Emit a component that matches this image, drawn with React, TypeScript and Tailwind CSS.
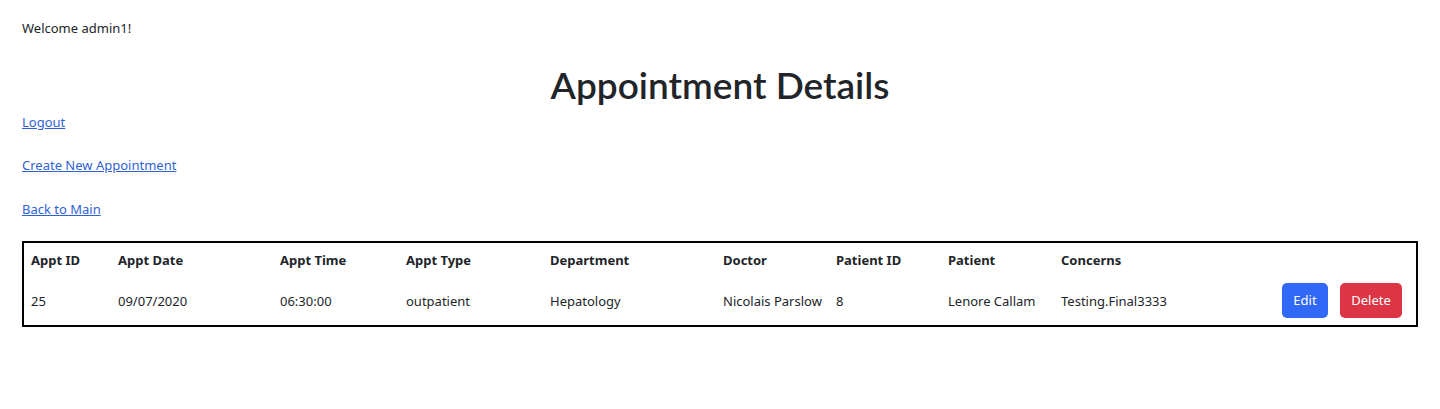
import React from "react";

type Appointment = {
  id: number;
  date: string;
  time: string;
  type: string;
  department: string;
  doctor: string;
  patientId: number;
  patient: string;
  concerns: string;
};

const appointments: Appointment[] = [
  {
    id: 25,
    date: "09/07/2020",
    time: "06:30:00",
    type: "outpatient",
    department: "Hepatology",
    doctor: "Nicolais Parslow",
    patientId: 8,
    patient: "Lenore Callam",
    concerns: "Testing.Final3333",
  },
];

const columns = [
  { label: "Appt ID", width: "w-[88px]" },
  { label: "Appt Date", width: "w-[162px]" },
  { label: "Appt Time", width: "w-[126px]" },
  { label: "Appt Type", width: "w-[144px]" },
  { label: "Department", width: "w-[173px]" },
  { label: "Doctor", width: "w-[113px]" },
  { label: "Patient ID", width: "w-[112px]" },
  { label: "Patient", width: "w-[113px]" },
  { label: "Concerns", width: "w-[221px]" },
];

const App: React.FC = () => {
  return (
    <main className="min-h-screen bg-white px-[22px] pt-[20px] font-['Noto_Sans','Liberation_Sans',sans-serif] text-[13px] text-[#212529]">
      <p className="leading-[16px]">Welcome admin1!</p>

      <h1 className="mt-[27px] text-center text-[37px] font-semibold leading-[44px] font-['Lato','Noto_Sans',sans-serif]">
        Appointment Details
      </h1>

      <div className="mt-[7px] flex flex-col items-start gap-[27px] leading-[16px]">
        <a href="#" className="text-[#2f62d6] underline">
          Logout
        </a>
        <a href="#" className="text-[#2f62d6] underline">
          Create New Appointment
        </a>
        <a href="#" className="mt-[1px] text-[#2f62d6] underline">
          Back to Main
        </a>
      </div>

      <table className="mt-[24px] w-full table-fixed border-collapse border-2 border-black">
        <thead>
          <tr className="h-[38px]">
            {columns.map((col) => (
              <th key={col.label} className={`${col.width} pb-[2px] pl-[7px] text-left align-middle font-bold`}>
                {col.label}
              </th>
            ))}
            <th />
          </tr>
        </thead>
        <tbody>
          {appointments.map((appt) => (
            <tr key={appt.id} className="h-[46px]">
              <td className="pb-[2px] pl-[7px] align-middle">{appt.id}</td>
              <td className="pb-[2px] pl-[7px] align-middle">{appt.date}</td>
              <td className="pb-[2px] pl-[7px] align-middle">{appt.time}</td>
              <td className="pb-[2px] pl-[7px] align-middle">{appt.type}</td>
              <td className="pb-[2px] pl-[7px] align-middle">{appt.department}</td>
              <td className="pb-[2px] pl-[7px] align-middle">{appt.doctor}</td>
              <td className="pb-[2px] pl-[7px] align-middle">{appt.patientId}</td>
              <td className="pb-[2px] pl-[7px] align-middle">{appt.patient}</td>
              <td className="pb-[2px] pl-[7px] align-middle">{appt.concerns}</td>
              <td className="pb-[4px] pr-[14px] align-middle">
                <div className="flex justify-end gap-[12px]">
                  <button className="h-[35px] w-[46px] rounded-[5px] bg-[#3268f6] text-white">Edit</button>
                  <button className="h-[35px] w-[62px] rounded-[5px] bg-[#dc3545] text-white">Delete</button>
                </div>
              </td>
            </tr>
          ))}
        </tbody>
      </table>
    </main>
  );
};

export default App;
